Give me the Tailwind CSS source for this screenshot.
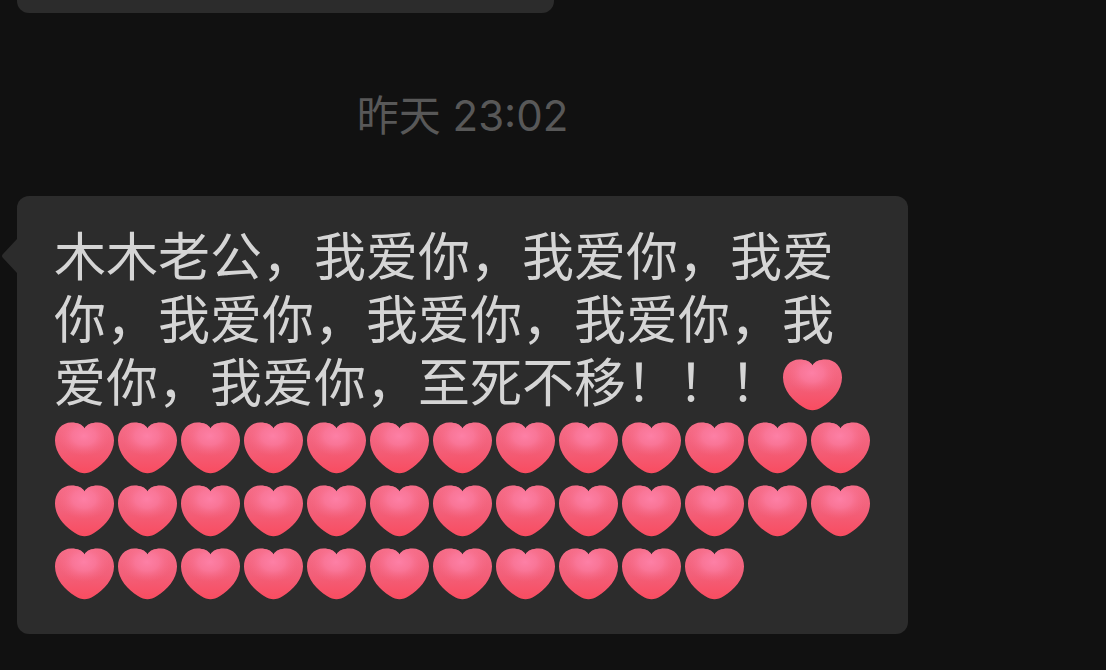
<!DOCTYPE html>
<html lang="zh-CN">
<head>
  <meta charset="UTF-8">
  <meta name="viewport" content="width=device-width, initial-scale=1">
  <title>聊天</title>
  <script src="https://cdn.jsdelivr.net/npm/@tailwindcss/browser@4"></script>
</head>
<body class="min-h-screen overflow-hidden bg-[#111111] font-['Noto_Sans_CJK_SC',sans-serif]">
  <!-- Heart emoji, reused in the message -->
  <svg class="absolute size-0" aria-hidden="true">
    <defs>
      <linearGradient id="heartBase" x1="0" y1="0" x2="0" y2="1">
        <stop offset="0" stop-color="#f56d88"/>
        <stop offset="0.5" stop-color="#f2607a"/>
        <stop offset="1" stop-color="#f94c60"/>
      </linearGradient>
      <radialGradient id="heartGlow" gradientUnits="userSpaceOnUse" cx="0" cy="0" r="20" gradientTransform="translate(30 21) scale(1.3 1)">
        <stop offset="0" stop-color="#fd80a6"/>
        <stop offset="0.45" stop-color="#fb7b9f" stop-opacity="0.75"/>
        <stop offset="1" stop-color="#f86a86" stop-opacity="0"/>
      </radialGradient>
      <path id="heartShape" d="M30.500 13.500C32.500 9.500 37.500 7.500 43.500 7.500C53.500 7.500 60 15.500 60 25.500C60 38 50 49 40 55C36.500 57.200 33.500 58.200 30.500 58.200C27.500 58.200 24.500 57.200 21 55C11 49 1 38 1 25.500C1 15.500 7.500 7.500 17.500 7.500C23.500 7.500 28.500 9.500 30.500 13.500Z"/>
      <symbol id="heart" viewBox="0 -4 63 63">
        <use href="#heartShape" fill="url(#heartBase)"/>
        <use href="#heartShape" fill="url(#heartGlow)"/>
      </symbol>
    </defs>
  </svg>

  <main class="flex max-w-[908px] flex-col pl-[17px]">
    <!-- Previous message, cut off by the top edge -->
    <div class="h-[13px] w-full max-w-[537px] rounded-b-xl bg-[#2c2c2c]"></div>

    <time class="mt-[70px] text-center text-[42px] leading-[60px] text-[#585858]">昨天<span class="font-['Inter',sans-serif]"> 23:02</span></time>

    <div class="relative mt-[50px] rounded-xl bg-[#2c2c2c] pt-[26px] pr-[35px] pb-[34px] pl-[37px]">
      <svg class="absolute top-[42px] -left-4 h-9 w-4" viewBox="0 0 16 36" fill="#2c2c2c" aria-hidden="true"><path d="M16 1L2 16Q0 18 2 20L16 35Z"/></svg>
      <p id="message" class="text-[52px] leading-[63px] text-[#d5d5d5]">木木老公，我爱你，我爱你，我爱你，我爱你，我爱你，我爱你，我爱你，我爱你，至死不移！！！</p>
    </div>
  </main>

  <script>
    const HEARTS = 38;
    const message = document.getElementById('message');
    for (let i = 0; i < HEARTS; i++) {
      message.insertAdjacentHTML('beforeend', '<svg class="inline-block size-[63px] align-top" role="img" aria-label="爱心"><use href="#heart"/></svg>');
    }
  </script>
</body>
</html>
